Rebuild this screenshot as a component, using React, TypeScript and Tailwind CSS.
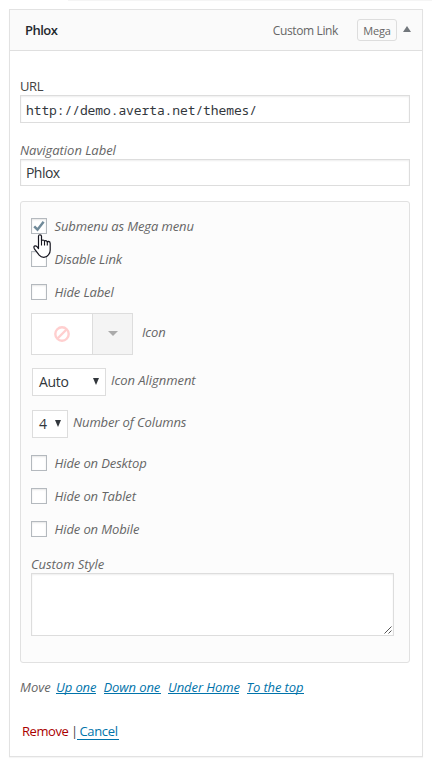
import React, { useState } from 'react';

const checks = [
  { id: 'mega', label: 'Submenu as Mega menu' },
  { id: 'nolink', label: 'Disable Link' },
  { id: 'nolabel', label: 'Hide Label' },
];

const visibility = [
  { id: 'desktop', label: 'Hide on Desktop' },
  { id: 'tablet', label: 'Hide on Tablet' },
  { id: 'mobile', label: 'Hide on Mobile' },
];

const moves = [
  { label: 'Up one', className: 'w-10' },
  { label: 'Down one', className: 'w-[57px]' },
  { label: 'Under Home', className: 'w-[71px]' },
  { label: 'To the top', className: 'w-[57px]' },
];

const HandCursor: React.FC = () => (
  <svg className="absolute left-[2px] top-4 z-10" width="18" height="25" viewBox="0 0 18 25">
    <path
      d="M5.5 13V2.3Q5.5.8 7 .8T8.5 2.3V6.8Q8.8 6 10 6T11.5 7.2Q11.9 6.6 12.8 6.6T14.3 8Q14.7 7.4 15.6 7.4Q17.2 7.6 17.2 9.5V16Q17.2 18.5 15.8 20.3Q14 23.3 10.8 23.3Q8 23.3 6.2 21.2L1.4 14.8Q.4 12.8 1.4 12.1Q2.8 11.4 4.2 12.9L5.5 14.5Z"
      fill="#fff"
      stroke="#15151f"
      strokeWidth="1.2"
      strokeLinejoin="round"
    />
    <path d="M8.5 6.5V11.5M11.5 7V11.5M14.3 7.8V11.5" stroke="#15151f" strokeWidth="1.1" fill="none" />
  </svg>
);

interface CheckRowProps {
  label: string;
  checked: boolean;
  onToggle: () => void;
  children?: React.ReactNode;
}

const CheckRow: React.FC<CheckRowProps> = ({ label, checked, onToggle, children }) => (
  <div className="relative flex h-4 items-center">
    <button
      onClick={onToggle}
      className="flex h-4 w-4 items-center justify-center border border-[#b4b9be] bg-white shadow-[inset_0_1px_2px_rgba(0,0,0,0.1)]"
    >
      {checked && (
        <svg width="12" height="12" viewBox="0 0 12 12">
          <path d="M1.2 6.3L4.5 9.7L10.6 1.8" fill="none" stroke="#708a99" strokeWidth="2.5" />
        </svg>
      )}
    </button>
    <span className="ml-[7.5px] italic tracking-[-0.12px] text-[#666]">{label}</span>
    {children}
  </div>
);

const App: React.FC = () => {
  const [active, setActive] = useState<string[]>(['mega']);

  const toggle = (id: string) => {
    setActive(active.includes(id) ? active.filter((a) => a !== id) : [...active, id]);
  };

  return (
    <div className="h-[764px] w-[432px] overflow-hidden bg-white font-['Open_Sans','Noto_Sans',sans-serif] text-[13px] leading-4 text-[#444]">
      <div className="ml-[68px] h-px bg-[#f5f5f5]" />
      <div className="ml-[9px] mt-2 h-[748px] w-[414px] border border-[#e2e2e2] bg-white shadow-[0_1px_1px_rgba(0,0,0,0.04)]">
        {/* Menu item bar */}
        <header className="flex h-[41px] items-center border-b border-[#dfdfdf] bg-[#fafafa] pl-[15px]">
          <span className="flex-1 font-semibold tracking-[-0.5px] text-[#23282d]">Phlox</span>
          <span className="pt-px text-xs tracking-[-0.37px] text-[#666]">Custom Link</span>
          <span className="ml-[19px] flex h-[22px] w-10 items-center justify-center rounded-[3px] border border-[#ddd] pt-px text-[11px] tracking-[-0.2px] text-[#666]">
            Mega
          </span>
          <svg className="mb-0.5 ml-1.5 mr-[11px]" width="8" height="6" viewBox="0 0 8 6">
            <path d="M4 0L8 6H0Z" fill="#72777c" />
          </svg>
        </header>

        <div className="flex flex-col pl-2.5 pr-3 pt-[27px]">
          <span className="mb-px tracking-[-0.4px]">URL</span>
          <div className="flex h-7 items-center border border-[#ddd] pl-[5px] pt-0.5 font-['Noto_Sans_Mono','DejaVu_Sans_Mono',monospace] tracking-[-0.1px] text-[#32373c] shadow-[inset_0_1px_2px_rgba(0,0,0,0.07)]">
            http://demo.averta.net/themes/
          </div>

          <span className="mb-px mt-[19px] italic tracking-[-0.04px] text-[#666]">Navigation Label</span>
          <div className="flex h-[27px] items-center border border-[#ddd] pl-[5px] text-sm tracking-[-0.55px] text-[#32373c] shadow-[inset_0_1px_2px_rgba(0,0,0,0.07)]">
            Phlox
          </div>

          {/* Mega menu options */}
          <section className="mt-[15px] h-[462px] rounded-[3px] border border-[#e1e1e1] bg-[#fcfcfc] pl-2.5 pt-4">
            <div className="flex flex-col gap-[17px]">
              {checks.map((item) => (
                <CheckRow
                  key={item.id}
                  label={item.label}
                  checked={active.includes(item.id)}
                  onToggle={() => toggle(item.id)}
                >
                  {item.id === 'mega' && <HandCursor />}
                </CheckRow>
              ))}
            </div>

            <div className="mt-[13px] flex items-center">
              <div className="flex h-[42px] w-[102px] border border-[#ddd]">
                <div className="flex w-[61px] items-center justify-center border-r border-[#ddd] bg-white">
                  <svg width="16" height="16" viewBox="0 0 16 16">
                    <circle cx="8" cy="8" r="6.7" fill="none" stroke="#ffcfcf" strokeWidth="2.4" />
                    <path d="M3.5 12.5L12.5 3.5" stroke="#ffcfcf" strokeWidth="2.4" />
                  </svg>
                </div>
                <div className="flex flex-1 items-center justify-center bg-[#f4f4f4]">
                  <svg className="mb-0.5" width="10" height="5" viewBox="0 0 10 5">
                    <path d="M0 0H10L5 5Z" fill="#aaa" />
                  </svg>
                </div>
              </div>
              <span className="mb-1 ml-[9px] italic tracking-[-0.2px] text-[#666]">Icon</span>
            </div>

            <div className="ml-px mt-[13px] flex h-7 items-center">
              <div className="flex h-7 w-[74px] items-center justify-between border border-[#ddd] bg-white pl-1.5 pr-1.5 text-sm tracking-[-0.3px] text-[#32373c]">
                <span>Auto</span>
                <svg className="mb-px" width="6" height="7" viewBox="0 0 6 7">
                  <path d="M0 0H6L3 7Z" fill="#32373c" />
                </svg>
              </div>
              <span className="mb-1 ml-[5px] italic tracking-[-0.05px] text-[#666]">Icon Alignment</span>
            </div>

            <div className="ml-px mt-3.5 flex h-7 items-center">
              <div className="flex h-7 w-9 items-center justify-between border border-[#ddd] bg-white pl-1.5 pr-1.5 text-sm text-[#32373c]">
                <span>4</span>
                <svg className="mb-px" width="6" height="7" viewBox="0 0 6 7">
                  <path d="M0 0H6L3 7Z" fill="#32373c" />
                </svg>
              </div>
              <span className="mb-1 ml-[5px] italic tracking-[-0.12px] text-[#666]">Number of Columns</span>
            </div>

            <div className="mt-[17px] flex flex-col gap-[17px]">
              {visibility.map((item) => (
                <CheckRow
                  key={item.id}
                  label={item.label}
                  checked={active.includes(item.id)}
                  onToggle={() => toggle(item.id)}
                />
              ))}
            </div>

            <div className="mt-[19px] flex flex-col">
              <span className="mb-px italic tracking-[-0.04px] text-[#666]">Custom Style</span>
              <div className="flex h-[63px] w-[363px] items-end justify-end border border-[#ddd] bg-white p-px shadow-[inset_0_1px_2px_rgba(0,0,0,0.07)]">
                <svg width="8" height="8" viewBox="0 0 8 8">
                  <path d="M0.5 7.5L7.5 0.5M4.5 7.5L7.5 4.5" stroke="#555" strokeWidth="1" />
                </svg>
              </div>
            </div>
          </section>

          <div className="mt-4 flex italic text-[#666]">
            <span className="w-9">Move</span>
            <div className="flex gap-[7.5px] whitespace-nowrap tracking-[-0.1px] text-[#0073aa]">
              {moves.map((m) => (
                <a key={m.label} className={`${m.className} h-[15px] border-b border-[#0073aa]`}>
                  {m.label}
                </a>
              ))}
            </div>
          </div>

          <div className="mt-7 flex whitespace-nowrap pl-0.5">
            <a className="w-[49px] tracking-[-0.45px] text-[#a00]">Remove</a>
            <span className="w-1.5">|</span>
            <a className="h-[17px] w-[42px] border-b border-[#0073aa] pl-[2.5px] tracking-[-0.35px] text-[#0073aa]">Cancel</a>
          </div>
        </div>
      </div>
    </div>
  );
};

export default App;
